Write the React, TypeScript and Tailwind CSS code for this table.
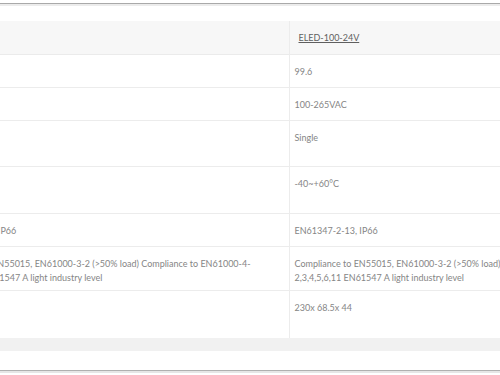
import React from "react";

type Row = { a: string; b: string; h: string };

const spec =
  "Compliance to EN55015, EN61000-3-2 (>50% load) Compliance to EN61000-4-2,3,4,5,6,11 EN61547 A light industry level";

const rows: Row[] = [
  { a: "99.6", b: "99.6", h: "h-[33px]" },
  { a: "100-265VAC", b: "100-265VAC", h: "h-[33px]" },
  { a: "Single", b: "Single", h: "h-[46px]" },
  { a: "-40~+60°C", b: "-40~+60°C", h: "h-[47px]" },
  { a: "EN61347-2-13, IP66", b: "EN61347-2-13, IP66", h: "h-[33px]" },
  { a: spec, b: spec, h: "h-[44px]" },
  { a: "230x 68.5x 44", b: "230x 68.5x 44", h: "h-[48px]" },
];

const cell = "align-top px-[5px] pt-[10px] text-left font-normal";
const first = "align-top pl-[13px] pr-[5px] pt-[10px] text-left font-normal border-r border-[#ececec]";
const head = "align-middle pl-[9px] pr-[5px] pt-[2px] text-left font-normal";

export default function App() {
  return (
    <div
      className="h-[375px] w-[500px] overflow-hidden bg-white text-[9px] leading-[14px] text-[#858585]"
      style={{ fontFamily: "Lato, 'Open Sans', sans-serif" }}
    >
      <div className="mt-[3px] h-px bg-[#a9a9a9]" />
      <div className="h-[2px] bg-[#ececec]" />
      <div className="h-[15px]" />
      <div className="ml-[-70px] w-[1100px]">
        <table className="w-[1058px] table-fixed border-collapse">
          <colgroup>
            <col className="w-[359px]" />
            <col className="w-[348px]" />
            <col className="w-[351px]" />
          </colgroup>
          <thead>
            <tr className="h-[33px] border-b border-[#ebebeb] bg-[#f7f7f7]">
              <th className={`${head} border-r border-[#ececec]`}>
                <span className="text-[#5f5f5f] underline">Model</span>
              </th>
              <th className={head}>
                <span className="text-[#5f5f5f] underline">ELED-100-24V</span>
              </th>
              <th className={head} />
            </tr>
          </thead>
          <tbody>
            {rows.map((r, i) => (
              <tr
                key={i}
                className={`${r.h} ${i < rows.length - 1 ? "border-b border-[#ececec]" : ""}`}
              >
                <td className={first}>
                  <div className="ml-[-10px] mr-[10px]">{r.a}</div>
                </td>
                <td className={cell}>{r.b}</td>
                <td className={cell} />
              </tr>
            ))}
          </tbody>
        </table>
      </div>
      <div className="h-[13px] bg-[#f1f1f1]" />
      <div className="h-[19px]" />
      <div className="h-px bg-[#b0b0b0]" />
      <div className="h-[2px] bg-[#e6e6e6]" />
    </div>
  );
}
